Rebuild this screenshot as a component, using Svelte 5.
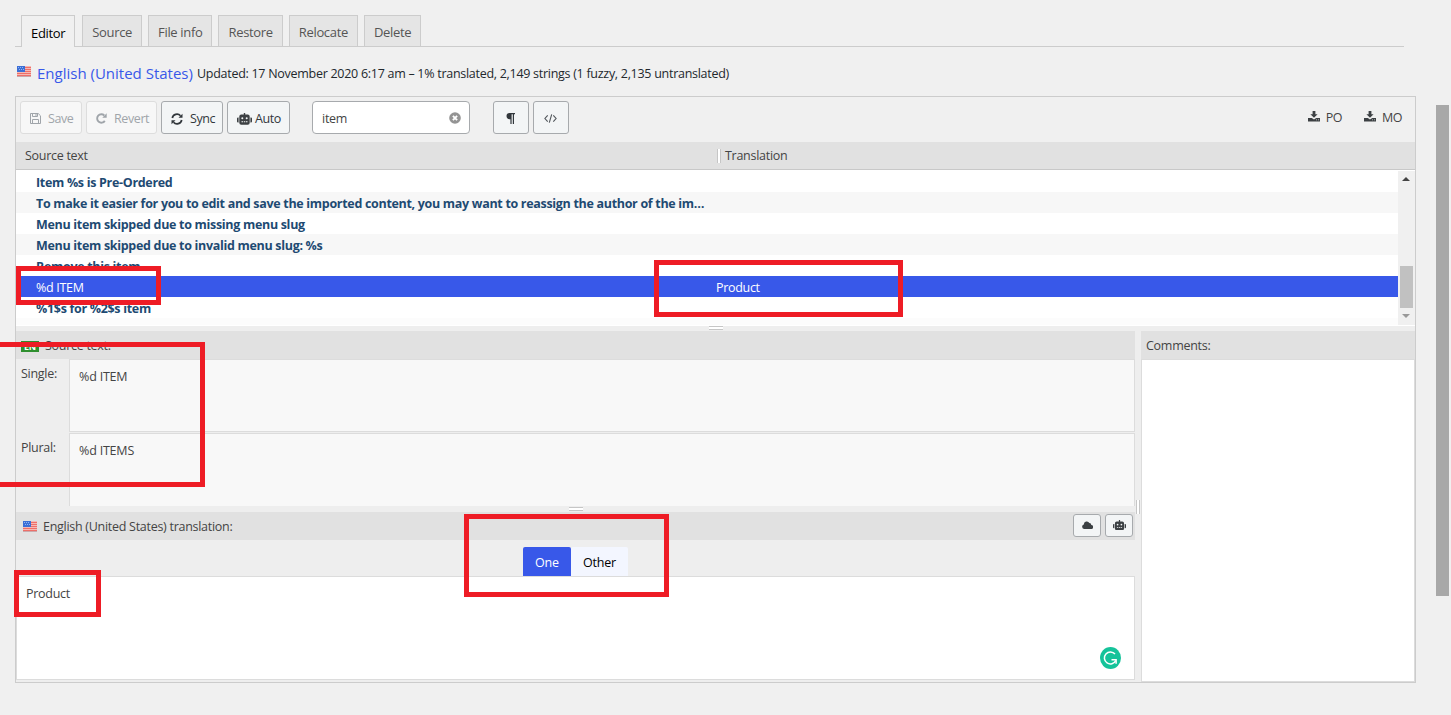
<script lang="ts">
  const tabs = ['Editor', 'Source', 'File info', 'Restore', 'Relocate', 'Delete'];

  const rows = [
    { source: 'Item %s is Pre-Ordered', target: '' },
    {
      source:
        'To make it easier for you to edit and save the imported content, you may want to reassign the author of the im…',
      target: ''
    },
    { source: 'Menu item skipped due to missing menu slug', target: '' },
    { source: 'Menu item skipped due to invalid menu slug: %s', target: '' },
    { source: 'Remove this item', target: '' },
    { source: '%d ITEM', target: 'Product' },
    { source: '%1$s for %2$s item', target: '' }
  ];

  const forms = ['One', 'Other'];

  let activeTab = $state('Editor');
  let selected = $state(5);
  let form = $state('One');
  let filter = $state('item');
  let translation = $state('Product');
  let comments = $state('');
</script>

{#snippet flag()}
  <svg class="flag" width="14" height="11" viewBox="0 0 14 11" shape-rendering="crispEdges">
    <rect width="14" height="11" fill="#d9d5dc" />
    <rect width="14" height="10" fill="#f6b9b4" />
    <path d="M0 1.5h14M0 3.5h14M0 5.5h14M0 7.5h14M0 9.5h14" stroke="#ee6f68" />
    <rect width="8" height="6" fill="#3c6fd6" />
    <path d="M1 1.5h1M3 1.5h1M5 1.5h1M2 3.5h1M4 3.5h1M6 3.5h1" stroke="#8fb4f2" />
    <rect y="10" width="14" height="1" fill="#c9a9ad" />
  </svg>
{/snippet}

{#snippet robot(w: number)}
  <svg width={w} height={w * 0.8} viewBox="0 0 15 12" fill="#3c4043">
    <path d="M6.8 0h1.4v1.600h2.500a2 2 0 0 1 2 2v6.200a2 2 0 0 1-2 2H4.300a2 2 0 0 1-2-2V3.600a2 2 0 0 1 2-2h2.500z" />
    <path d="M0 5.500a1 1 0 0 1 1-1h.6v5H1a1 1 0 0 1-1-1zM13.400 4.500h.6a1 1 0 0 1 1 1v3a1 1 0 0 1-1 1h-.6z" />
    <g fill="#f3f5f6">
      <circle cx="5.300" cy="5.300" r="1" />
      <circle cx="9.700" cy="5.300" r="1" />
      <path d="M4.500 8.300h1.500v1H4.500zM6.800 8.300h1.500v1H6.800zM9 8.300h1.500v1H9z" />
    </g>
  </svg>
{/snippet}

{#snippet download()}
  <svg width="12" height="11" viewBox="0 0 12 11" fill="#3c4043">
    <path d="M4.600 0h2.800v3.200h2.200L6 6.800 2.400 3.200h2.200z" />
    <path d="M0 7h3.800L6 8.600 8.200 7H12v3.500H0z" />
    <path d="M8.200 8.800h.8M10 8.800h.8" stroke="#f0f0f0" stroke-width=".8" />
  </svg>
{/snippet}

<div class="page">
  <nav class="tabs">
    {#each tabs as tab}
      <button class="tab" class:active={tab === activeTab} onclick={() => (activeTab = tab)}>{tab}</button>
    {/each}
  </nav>

  <div class="summary">
    {@render flag()}
    <span class="locale">English (United States)</span>
    <span class="meta">Updated: 17 November 2020 6:17 am – 1% translated, 2,149 strings (1 fuzzy, 2,135 untranslated)</span>
  </div>

  <div class="editor">
    <div class="toolbar">
      <button class="btn save" disabled>
        <svg width="11" height="11" viewBox="0 0 11 11" fill="none" stroke="#a0a5aa">
          <path d="M.5.5h7.700L10.500 2.800v7.700H.5z" />
          <path d="M2.500.5v3h5v-3M2.500 10.500v-4h6v4M6 1v2" />
        </svg>
        <span>Save</span>
      </button>
      <button class="btn revert" disabled>
        <svg width="11" height="11" viewBox="0 0 11 11" fill="none" stroke="#a0a5aa" stroke-width="1.900">
          <path d="M8.800 7.900A4.200 4.200 0 1 1 8.300 2.500" />
          <path d="M10.700.3v4.400H6.300z" fill="#a0a5aa" stroke="none" />
        </svg>
        <span>Revert</span>
      </button>
      <button class="btn sync">
        <svg width="12" height="12" viewBox="0 0 12 12" fill="none" stroke="#32373c" stroke-width="1.700">
          <path d="M1.300 5A4.700 4.700 0 0 1 9.500 2.800M10.700 7A4.700 4.700 0 0 1 2.500 9.200" />
          <path d="M11.500.8v4H7.500zM.5 11.200v-4h4z" fill="#32373c" stroke="none" />
        </svg>
        <span>Sync</span>
      </button>
      <button class="btn auto">
        {@render robot(15)}
        <span>Auto</span>
      </button>
      <div class="search">
        <input type="text" bind:value={filter} />
        <svg width="12" height="12" viewBox="0 0 12 12">
          <circle cx="6" cy="6" r="5.800" fill="#949494" />
          <path d="M3.900 3.900l4.200 4.200M8.100 3.900l-4.200 4.200" stroke="#fff" stroke-width="1.900" />
        </svg>
      </div>
      <button class="btn square" aria-label="Toggle invisibles">
        <svg width="9" height="11" viewBox="0 0 9 11" fill="#32373c">
          <path d="M3.600 0H9v1.200H8V11H6.800V1.200H5.600V11H4.400V6.200H3.600a3.100 3.100 0 0 1 0-6.200z" />
        </svg>
      </button>
      <button class="btn square" aria-label="Toggle code view">
        <svg width="13" height="9" viewBox="0 0 13 9" fill="none" stroke="#50555a" stroke-width="1.100">
          <path d="M3.700 1.300L.9 4.500l2.800 3.200M9.300 1.300l2.800 3.200-2.800 3.200M7.700.3L5.300 8.700" />
        </svg>
      </button>
      <div class="downloads">
        <span>{@render download()}PO</span>
        <span>{@render download()}MO</span>
      </div>
    </div>

    <div class="thead">
      <span class="col-source">Source text</span>
      <i class="grip-v"></i>
      <span class="col-target">Translation</span>
    </div>

    <div class="list">
      <div class="rows">
        {#each rows as row, i}
          <!-- svelte-ignore a11y_click_events_have_key_events -->
          <!-- svelte-ignore a11y_no_static_element_interactions -->
          <div class="row" class:selected={i === selected} onclick={() => (selected = i)}>
            <span class="source">{row.source}</span>
            <span class="target">{row.target}</span>
          </div>
        {/each}
        <div class="row rest"></div>
      </div>
      <div class="scroll">
        <i class="up"></i>
        <i class="thumb"></i>
        <i class="down"></i>
      </div>
    </div>

    <div class="split-h"><i class="grip-h"></i></div>

    <div class="panes">
      <div class="left">
        <div class="bar source-bar">
          <span class="lang">EN</span>
          <span>Source text:</span>
        </div>
        <div class="plurals">
          <div class="label">Single:</div>
          <div class="field first">%d ITEM</div>
          <div class="label">Plural:</div>
          <div class="field second">%d ITEMS</div>
        </div>
        <div class="split-h inner"><i class="grip-h"></i></div>
        <div class="bar target-bar">
          {@render flag()}
          <span class="title">English (United States) translation:</span>
          <button class="mini" aria-label="Fetch suggestions">
            <svg width="11" height="8" viewBox="0 0 11 8" fill="#3c4043">
              <path d="M2.300 8a2.300 2.300 0 0 1-.5-4.500A3 3 0 0 1 7.400 2 2 2 0 0 1 9.300 4 2 2 0 0 1 9 8z" />
            </svg>
          </button>
          <button class="mini" aria-label="Auto translate">{@render robot(13)}</button>
        </div>
        <div class="forms">
          {#each forms as f}
            <button class:active={f === form} onclick={() => (form = f)}>{f}</button>
          {/each}
        </div>
        <div class="entry">
          <textarea bind:value={translation} spellcheck="false"></textarea>
          <svg class="checker" width="21" height="22" viewBox="0 0 21 22">
            <ellipse cx="10.500" cy="11" rx="10.500" ry="11" fill="#15c39a" />
            <path d="M15 7.100A6 6 0 1 0 15.800 13.500" fill="none" stroke="#fff" stroke-width="1.500" />
            <path d="M11.500 12.800h4.600v4" fill="none" stroke="#fff" stroke-width="1.500" />
          </svg>
        </div>
      </div>
      <div class="split-v"><i class="grip-v"></i></div>
      <div class="right">
        <div class="bar comments-bar">Comments:</div>
        <textarea bind:value={comments}></textarea>
      </div>
    </div>
  </div>

  <i class="page-thumb"></i>
  <i class="mark mark-row"></i>
  <i class="mark mark-target"></i>
  <i class="mark mark-source"></i>
  <i class="mark mark-forms"></i>
  <i class="mark mark-entry"></i>
</div>

<style>
  :global(body) {
    margin: 0;
    background: #f0f0f0;
    overflow: hidden;
  }

  .page,
  button,
  input,
  textarea {
    font-family: 'Open Sans', 'Noto Sans', sans-serif;
    font-size: 12.5px;
    letter-spacing: -0.28px;
    color: #444;
  }

  .page {
    position: relative;
    width: 1451px;
    height: 715px;
    box-sizing: border-box;
    padding: 15px 35px 0 15px;
    overflow: hidden;
  }

  .page * {
    box-sizing: border-box;
  }

  button {
    margin: 0;
    padding: 0;
    cursor: pointer;
  }

  svg {
    display: block;
    flex: none;
  }

  .tabs {
    display: flex;
    gap: 6px;
    width: 1389px;
    height: 32px;
    padding-left: 6px;
    border-bottom: 1px solid #ccc;
  }

  .tab {
    height: 31px;
    padding: 2px 9px 0;
    border: 1px solid #ccc;
    border-bottom: none;
    background: #e5e5e5;
    color: #555;
    font-size: 13px;
    font-weight: 500;
    letter-spacing: -0.33px;
  }

  .tab.active {
    height: 32px;
    margin-right: 1px;
    background: #f0f0f0;
    color: #000;
  }

  .summary {
    display: flex;
    align-items: center;
    height: 49px;
    padding: 3px 0 0 2px;
    white-space: nowrap;
  }

  .summary .flag {
    margin: -3px 6px 0 0;
  }

  .locale {
    width: 160px;
    color: #3858e9;
    font-size: 15px;
    letter-spacing: 0;
  }

  .meta {
    color: #23282d;
  }

  .editor {
    display: flex;
    flex-direction: column;
    width: 1401px;
    height: 587px;
    border: 1px solid #ccc;
    background: #f0f0f0;
  }

  .toolbar {
    display: flex;
    gap: 4px;
    height: 45px;
    padding: 4px 13px 0 4px;
  }

  .btn {
    display: flex;
    align-items: center;
    height: 33px;
    padding: 2px 0 0 9px;
    border: 1px solid #a7aaad;
    border-radius: 3px;
    background: #f3f5f6;
    color: #32373c;
    letter-spacing: -0.4px;
  }

  .btn:disabled {
    border-color: #ddd;
    background: #f7f7f7;
    color: #a0a5aa;
  }

  .btn svg {
    margin-right: 7px;
  }

  .save {
    width: 62px;
  }

  .revert {
    width: 71px;
  }

  .sync {
    width: 62px;
  }

  .auto {
    width: 63px;
  }

  .auto svg {
    margin-right: 3px;
  }

  .search {
    display: flex;
    align-items: center;
    width: 158px;
    height: 33px;
    margin: 0 19px 0 18px;
    padding: 0 8px 0 9px;
    border: 1px solid #a7aaad;
    border-radius: 4px;
    background: #fff;
  }

  .search input {
    flex: 1;
    min-width: 0;
    padding: 1px 0 0;
    border: none;
    outline: none;
  }

  .square {
    justify-content: center;
    width: 36px;
    padding: 2px 1px 0 0;
  }

  .btn.square svg {
    margin: 0;
  }

  .downloads {
    display: flex;
    gap: 22px;
    margin-left: auto;
    height: 32px;
  }

  .downloads span {
    display: flex;
    align-items: center;
    gap: 6px;
    letter-spacing: -0.5px;
  }

  .downloads svg {
    margin-top: -2px;
  }

  .thead {
    display: flex;
    align-items: center;
    height: 28px;
    flex: none;
    padding-left: 9px;
    border-bottom: 1px solid #c8c8c8;
    background: #e1e1e1;
  }

  .col-source {
    width: 692px;
  }

  .col-target {
    margin-left: 4px;
  }

  .grip-v {
    width: 4px;
    height: 14px;
    border: solid #c6c6c6;
    border-width: 0 1px;
    background: #fff;
  }

  .list {
    display: flex;
    height: 156px;
    flex: none;
    border: solid #fff;
    border-width: 1px 0;
    background: #fff;
  }

  .rows {
    flex: 1;
    overflow: hidden;
  }

  .row {
    display: flex;
    height: 21px;
    padding-left: 20px;
    line-height: 24px;
    color: #1e4a72;
    font-weight: 700;
    letter-spacing: -0.31px;
    white-space: nowrap;
  }

  .row:nth-child(even) {
    background: #f7f7f7;
  }

  .row.selected {
    background: #3858e9;
    color: #fff;
    font-weight: 400;
  }

  .row.rest {
    background: #fcfcfc;
  }

  .source {
    width: 680px;
  }

  .scroll {
    display: flex;
    flex-direction: column;
    align-items: center;
    width: 17px;
    padding: 6px 0 7px;
    background: #f0f0f0;
  }

  .up,
  .down {
    margin-right: 1px;
    border: 4px solid transparent;
    border-top: none;
    border-bottom: 4px solid #444;
  }

  .down {
    border-top: 4px solid #999;
    border-bottom: none;
    margin-top: auto;
  }

  .thumb {
    width: 13px;
    height: 42px;
    margin-top: 85px;
    background: #c1c1c1;
  }

  .split-h {
    display: flex;
    justify-content: center;
    height: 5px;
    flex: none;
    background: #eee;
  }

  .grip-h {
    width: 14px;
    height: 4px;
    border: solid #c6c6c6;
    border-width: 1px 0;
    background: #fff;
  }

  .panes {
    display: flex;
    flex: 1;
    min-height: 0;
    background: #eee;
  }

  .left {
    display: flex;
    flex-direction: column;
    width: 1119px;
  }

  .bar {
    display: flex;
    align-items: center;
    height: 28px;
    flex: none;
    background: #e1e1e1;
  }

  .source-bar {
    gap: 6px;
    padding-left: 5px;
  }

  .lang {
    width: 18px;
    height: 11px;
    margin-top: 3px;
    background: #2f8f2f;
    color: #fff;
    font-size: 9px;
    font-weight: 700;
    line-height: 11px;
    text-align: center;
  }

  .plurals {
    display: grid;
    grid-template-columns: 53px 1fr;
    grid-template-rows: 73px 73px;
    row-gap: 1px;
    height: 147px;
  }

  .label {
    padding: 6px 0 0 5px;
  }

  .field {
    padding: 8px 9px;
    border: 1px solid #dcdcdc;
    background: #f8f8f8;
    letter-spacing: -0.2px;
  }

  .second {
    border-bottom: none;
  }

  .inner {
    height: 6px;
    padding-top: 1px;
  }

  .target-bar {
    padding: 0 2px 0 7px;
  }

  .title {
    margin: 0 auto 0 6px;
  }

  .mini {
    display: flex;
    align-items: center;
    justify-content: center;
    width: 28px;
    height: 23px;
    margin: -2px 0 0 4px;
    border: 1px solid #a7aaad;
    border-radius: 3px;
    background: #f3f5f6;
  }

  .forms {
    display: flex;
    align-items: flex-end;
    justify-content: center;
    height: 36px;
    flex: none;
  }

  .forms button {
    width: 57px;
    height: 29px;
    padding-top: 1px;
    border: none;
    border-radius: 2px 2px 0 0;
    background: #f3f6ff;
    color: #000;
    letter-spacing: -0.2px;
  }

  .forms .active {
    width: 48px;
    background: #3858e9;
    color: #fff;
  }

  .entry {
    position: relative;
    height: 104px;
    flex: none;
  }

  textarea {
    display: block;
    width: 100%;
    height: 100%;
    padding: 8px 9px;
    border: 1px solid #dcdcdc;
    border-radius: 0;
    background: #fff;
    outline: none;
    resize: none;
  }

  .checker {
    position: absolute;
    right: 14px;
    bottom: 11px;
  }

  .split-v {
    display: flex;
    justify-content: center;
    width: 6px;
    padding: 169px 1px 0 0;
  }

  .right {
    display: flex;
    flex-direction: column;
    flex: 1;
  }

  .right textarea {
    flex: 1;
  }

  .comments-bar {
    padding-left: 5px;
  }

  .page-thumb {
    position: absolute;
    left: 1436px;
    top: 105px;
    width: 13px;
    height: 491px;
    background: #a8a8a8;
  }

  /* red annotation frames drawn over the page */
  .mark {
    position: absolute;
    border: 5px solid #ee1c25;
    pointer-events: none;
  }

  .mark-row {
    left: 16px;
    top: 266px;
    width: 145px;
    height: 39px;
  }

  .mark-target {
    left: 654px;
    top: 260px;
    width: 249px;
    height: 57px;
  }

  .mark-source {
    left: -5px;
    top: 342px;
    width: 210px;
    height: 145px;
  }

  .mark-forms {
    left: 464px;
    top: 514px;
    width: 205px;
    height: 83px;
  }

  .mark-entry {
    left: 14px;
    top: 570px;
    width: 87px;
    height: 47px;
  }
</style>
